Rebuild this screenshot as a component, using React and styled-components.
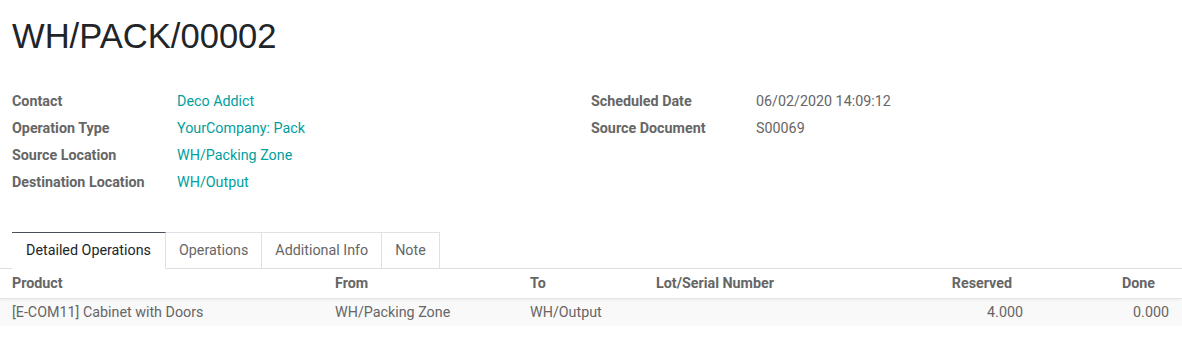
import React from 'react';
import styled, { createGlobalStyle } from 'styled-components';

const GlobalStyle = createGlobalStyle`
  html, body {
    margin: 0;
    padding: 0;
    background: #fff;
  }
  body {
    font-family: Roboto, "Noto Sans", sans-serif;
    font-size: 14.3px;
    color: #4c4c4c;
  }
`;

const Sheet = styled.div`
  width: 1182px;
  height: 338px;
  overflow: hidden;
  background: #fff;
`;

const Title = styled.h1`
  margin: 0;
  padding: 16px 12px 0;
  font-family: "Liberation Sans", Arial, sans-serif;
  font-weight: 400;
  font-size: 34.6px;
  line-height: 40px;
  color: #212529;
`;

const Groups = styled.div`
  display: grid;
  grid-template-columns: 579px 1fr;
  padding: 31px 12px 0;
`;

const FieldGrid = styled.div`
  display: grid;
  grid-template-columns: 165px 1fr;
  grid-auto-rows: 27px;
  align-items: center;
`;

const Label = styled.div`
  font-weight: 700;
  color: #666;
`;

const Value = styled.div`
  color: ${p => (p.$link ? '#00A09D' : '#666')};
`;

const Tabs = styled.div`
  display: flex;
  margin-top: 37px;
  padding-left: 12px;
  border-bottom: 1px solid #dee2e6;
`;

const Tab = styled.div`
  height: 37px;
  box-sizing: border-box;
  display: flex;
  align-items: center;
  padding: 0 ${p => (p.$active ? '14px' : '13px')} 1px;
  margin-bottom: -1px;
  color: ${p => (p.$active ? '#212529' : '#666')};
  background: #fff;
  border: 1px solid #dee2e6;
  border-left-width: ${p => (p.$first ? '0' : '1px')};
  border-top-color: ${p => (p.$active ? '#495057' : '#dee2e6')};
  border-bottom-color: ${p => (p.$active ? '#fff' : '#dee2e6')};
  & + & {
    border-left-width: 0;
  }
`;

const Row = styled.div`
  display: grid;
  grid-template-columns: 335px 195px 126px 1fr 136px 150px;
  height: ${p => (p.$head ? '30px' : '27px')};
  box-sizing: border-box;
  padding-bottom: 2px;
  align-items: center;
  background: ${p => (p.$head ? '#fff' : '#f9f9f9')};
  border-bottom: ${p => (p.$head ? '1px solid #e4e6e8' : 'none')};
  box-shadow: ${p => (p.$head ? '0 1px 3px rgba(0, 0, 0, 0.06)' : 'none')};
  position: relative;
  z-index: ${p => (p.$head ? 1 : 0)};
`;

const Cell = styled.div`
  text-align: ${p => (p.$num ? 'right' : 'left')};
  padding-left: ${p => (p.$first ? '12px' : '0')};
  padding-right: ${p => p.$pr || 0}px;
  font-weight: ${p => (p.$head ? 700 : 400)};
  color: #666;
  white-space: nowrap;
`;

const headers = [
  { label: 'Product' },
  { label: 'From' },
  { label: 'To' },
  { label: 'Lot/Serial Number' },
  { label: 'Reserved', num: true, pr: 20 },
  { label: 'Done', num: true, pr: 27 },
];

const row = [
  { v: '[E-COM11] Cabinet with Doors' },
  { v: 'WH/Packing Zone' },
  { v: 'WH/Output' },
  { v: '' },
  { v: '4.000', num: true, pr: 9 },
  { v: '0.000', num: true, pr: 13 },
];

export default function App() {
  return (
    <Sheet>
      <GlobalStyle />
      <Title>WH/PACK/00002</Title>
      <Groups>
        <FieldGrid>
          <Label>Contact</Label>
          <Value $link>Deco Addict</Value>
          <Label>Operation Type</Label>
          <Value $link>YourCompany: Pack</Value>
          <Label>Source Location</Label>
          <Value $link>WH/Packing Zone</Value>
          <Label>Destination Location</Label>
          <Value $link>WH/Output</Value>
        </FieldGrid>
        <FieldGrid>
          <Label>Scheduled Date</Label>
          <Value>06/02/2020 14:09:12</Value>
          <Label>Source Document</Label>
          <Value>S00069</Value>
        </FieldGrid>
      </Groups>
      <Tabs>
        <Tab $active $first>Detailed Operations</Tab>
        <Tab>Operations</Tab>
        <Tab>Additional Info</Tab>
        <Tab>Note</Tab>
      </Tabs>
      <Row $head>
        {headers.map((h, i) => (
          <Cell key={h.label} $head $first={i === 0} $num={h.num} $pr={h.pr}>
            {h.label}
          </Cell>
        ))}
      </Row>
      <Row>
        {row.map((c, i) => (
          <Cell key={i} $first={i === 0} $num={c.num} $pr={c.pr}>
            {c.v}
          </Cell>
        ))}
      </Row>
    </Sheet>
  );
}
